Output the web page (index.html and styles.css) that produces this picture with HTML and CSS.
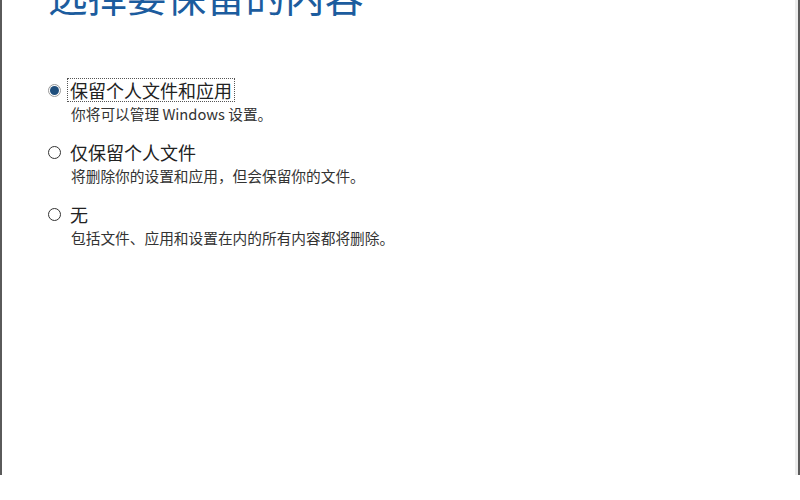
FILE: index.html
```html
<!DOCTYPE html>
<html lang="zh-CN">
<head>
    <meta charset="UTF-8">
    <title>选择要保留的内容</title>
    <link rel="stylesheet" href="styles.css">
</head>
<body>
<div class="frame">
    <h1 class="title">选择要保留的内容</h1>

    <!-- Варианты сохранения -->
    <div class="options">
        <div class="option">
            <div class="option-row">
                <span class="radio checked"></span>
                <span class="option-label focused">保留个人文件和应用</span>
            </div>
            <p class="option-desc">你将可以管理 Windows 设置。</p>
        </div>
        <div class="option">
            <div class="option-row">
                <span class="radio"></span>
                <span class="option-label">仅保留个人文件</span>
            </div>
            <p class="option-desc">将删除你的设置和应用，但会保留你的文件。</p>
        </div>
        <div class="option">
            <div class="option-row">
                <span class="radio"></span>
                <span class="option-label">无</span>
            </div>
            <p class="option-desc">包括文件、应用和设置在内的所有内容都将删除。</p>
        </div>
    </div>
</div>
</body>
</html>
```

FILE: styles.css
```css
* {
    margin: 0;
    padding: 0;
    box-sizing: border-box;
}
html, body {
    height: 100%;
    overflow: hidden;
}
body {
    font-family: "Noto Sans CJK SC", "Noto Sans", sans-serif;
    background-color: #fff;
    color: #222;
}

/* Окно */
.frame {
    height: 500px;
    border-left: 2px solid #5a5a5a;
    border-right: 2px solid #5a5a5a;
    box-shadow: inset -3px 0 0 #ececec;
    padding-left: 46px;
}

.title {
    font-size: 39.5px;
    font-weight: 400;
    line-height: 39px;
    color: #1c5c9e;
    margin-top: -25px;
}

/* Варианты */
.options {
    margin-top: 64px;
}
.option {
    margin-bottom: 17px;
}
.option-row {
    display: flex;
    align-items: center;
    height: 24px;
}
.radio {
    width: 13px;
    height: 13px;
    border: 1px solid #333;
    border-radius: 50%;
    flex-shrink: 0;
    margin-right: 7px;
    position: relative;
}
.radio.checked {
    border-color: #9a9a9a;
}
.radio.checked::after {
    content: '';
    position: absolute;
    top: 1px;
    left: 1px;
    width: 9px;
    height: 9px;
    border-radius: 50%;
    background: #1f4e7c;
}
.option-label {
    font-size: 18px;
    line-height: 22px;
    padding: 0 2px;
    color: #222;
}
.option-label.focused {
    outline: 1px dotted #555;
}
.option-desc {
    font-size: 14.7px;
    line-height: 18px;
    margin-top: 3px;
    padding-left: 23px;
    color: #333;
}
```
